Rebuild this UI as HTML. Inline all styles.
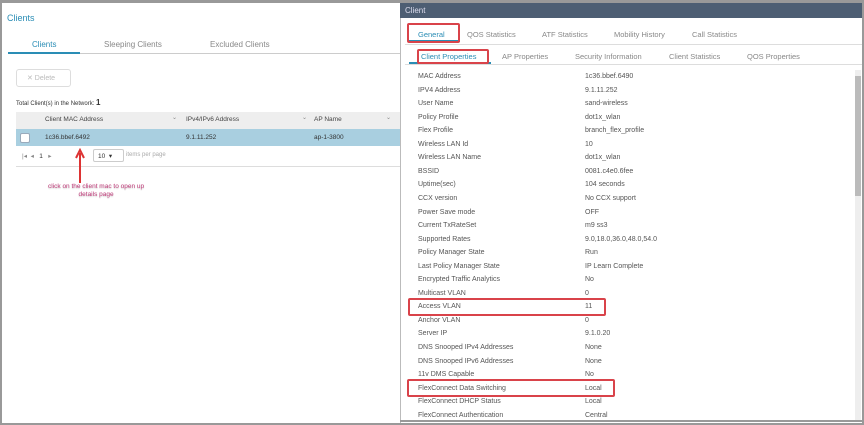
<!DOCTYPE html>
<html><head><style>
*{margin:0;padding:0;box-sizing:border-box}
body{width:864px;height:425px;background:#fff;font-family:"Liberation Sans",sans-serif;position:relative;overflow:hidden;color:#555}
.a{position:absolute;white-space:nowrap}
.rb{position:absolute;border:2px solid #d9434a;border-radius:2px}
.l{font-size:7px;color:#555}
</style></head><body>
<div class="a" style="left:0;top:0;width:864px;height:425px;border:2px solid #999;border-top-width:3px"></div>
<div class="a" style="left:7px;top:13px;font-size:9px;color:#2a8db5">Clients</div>
<div class="a" style="left:32px;top:40px;font-size:8px;color:#2a8db5">Clients</div>
<div class="a" style="left:104px;top:40px;font-size:8px;color:#888">Sleeping Clients</div>
<div class="a" style="left:210px;top:40px;font-size:8px;color:#888">Excluded Clients</div>
<div class="a" style="left:8px;top:53px;width:392px;height:1px;background:#ccc"></div>
<div class="a" style="left:8px;top:52px;width:72px;height:2px;background:#2a8db5"></div>
<div class="a" style="left:16px;top:69px;width:55px;height:18px;border:1px solid #ddd;border-radius:3px;font-size:7px;color:#bbb;padding:4px 0 0 10px">✕ Delete</div>
<div class="a" style="left:16px;top:98px;font-size:6px;color:#333">Total Client(s) in the Network: <b style="font-size:8px">1</b></div>
<div class="a" style="left:16px;top:112px;width:384px;height:17px;background:#eee"></div>
<div class="a" style="left:45px;top:116px;font-size:6.5px;color:#444">Client MAC Address</div>
<div class="a" style="left:172px;top:114px;font-size:6px;color:#888">⌄</div>
<div class="a" style="left:186px;top:116px;font-size:6.5px;color:#444">IPv4/IPv6 Address</div>
<div class="a" style="left:302px;top:114px;font-size:6px;color:#888">⌄</div>
<div class="a" style="left:314px;top:116px;font-size:6.5px;color:#444">AP Name</div>
<div class="a" style="left:386px;top:114px;font-size:6px;color:#888">⌄</div>
<div class="a" style="left:16px;top:129px;width:384px;height:17px;background:#a9cfe0"></div>
<div class="a" style="left:20px;top:133px;width:10px;height:10px;background:#fff;border:1px solid #9ab;border-radius:2px"></div>
<div class="a" style="left:45px;top:134px;font-size:6.5px;color:#333">1c36.bbef.6492</div>
<div class="a" style="left:186px;top:134px;font-size:6.5px;color:#333">9.1.11.252</div>
<div class="a" style="left:314px;top:134px;font-size:6.5px;color:#333">ap-1-3800</div>
<div class="a" style="left:16px;top:146px;width:384px;height:21px;border-bottom:1px solid #ddd"></div>
<div class="a" style="left:22px;top:152px;font-size:6.5px;color:#888">|◂ &nbsp;◂ &nbsp;&nbsp;<span style="color:#333">1</span>&nbsp;&nbsp; ▸</div>
<div class="a" style="left:93px;top:149px;width:31px;height:13px;border:1px solid #ccc;border-radius:2px;font-size:6.5px;color:#333;padding:2px 0 0 4px">10 &nbsp;▾</div>
<div class="a" style="left:126px;top:152px;font-size:6px;color:#aaa">items per page</div>
<svg class="a" style="left:74px;top:148px" width="12" height="36"><path d="M6 35 L6 5 M2 10 L6 2 L10 10" stroke="#d33" stroke-width="2" fill="none"/></svg>
<div class="a" style="left:48px;top:183px;font-size:6.5px;color:#c03c7a;text-align:center;line-height:8px;text-shadow:0 1px 1px #ccc">click on the client mac to open up<br>details page</div>

<div class="a" style="left:400px;top:3px;width:462px;height:420px;background:#fff;border-left:1px solid #bbb"></div>
<div class="a" style="left:400px;top:3px;width:462px;height:15px;background:#4d5e73;color:#dde;font-size:8px;padding:3px 0 0 5px">Client</div>
<div class="a" style="left:418px;top:30px;font-size:7.5px;color:#2a8db5">General</div>
<div class="a" style="left:467px;top:30px;font-size:7.5px;color:#888">QOS Statistics</div>
<div class="a" style="left:542px;top:30px;font-size:7.5px;color:#888">ATF Statistics</div>
<div class="a" style="left:614px;top:30px;font-size:7.5px;color:#888">Mobility History</div>
<div class="a" style="left:692px;top:30px;font-size:7.5px;color:#888">Call Statistics</div>
<div class="a" style="left:405px;top:44px;width:457px;height:1px;background:#ddd"></div>
<div class="a" style="left:408px;top:40px;width:52px;height:2px;background:#2a8db5"></div>
<div class="rb" style="left:407px;top:23px;width:53px;height:20px"></div>
<div class="a" style="left:421px;top:52px;font-size:7.5px;color:#2a8db5">Client Properties</div>
<div class="a" style="left:502px;top:52px;font-size:7.5px;color:#888">AP Properties</div>
<div class="a" style="left:575px;top:52px;font-size:7.5px;color:#888">Security Information</div>
<div class="a" style="left:669px;top:52px;font-size:7.5px;color:#888">Client Statistics</div>
<div class="a" style="left:747px;top:52px;font-size:7.5px;color:#888">QOS Properties</div>
<div class="a" style="left:405px;top:64px;width:457px;height:1px;background:#ddd"></div>
<div class="a" style="left:409px;top:62px;width:82px;height:2px;background:#2a8db5"></div>
<div class="rb" style="left:417px;top:49px;width:72px;height:15px"></div>
<div class="a" style="left:855px;top:70px;width:6px;height:350px;background:#eee"></div>
<div class="a" style="left:855px;top:76px;width:6px;height:120px;background:#bbb"></div>
<div id="rows"></div>
<div class="rb" style="left:408px;top:298px;width:198px;height:18px"></div>
<div class="rb" style="left:407px;top:379px;width:208px;height:18px"></div>
<div class="a" style="left:400px;top:420px;width:462px;height:2px;background:#999"></div>
<script>
var r=[["MAC Address","1c36.bbef.6490"],["IPV4 Address","9.1.11.252"],["User Name","sand-wireless"],["Policy Profile","dot1x_wlan"],["Flex Profile","branch_flex_profile"],["Wireless LAN Id","10"],["Wireless LAN Name","dot1x_wlan"],["BSSID","0081.c4e0.6fee"],["Uptime(sec)","104 seconds"],["CCX version","No CCX support"],["Power Save mode","OFF"],["Current TxRateSet","m9 ss3"],["Supported Rates","9.0,18.0,36.0,48.0,54.0"],["Policy Manager State","Run"],["Last Policy Manager State","IP Learn Complete"],["Encrypted Traffic Analytics","No"],["Multicast VLAN","0"],["Access VLAN","11"],["Anchor VLAN","0"],["Server IP","9.1.0.20"],["DNS Snooped IPv4 Addresses","None"],["DNS Snooped IPv6 Addresses","None"],["11v DMS Capable","No"],["FlexConnect Data Switching","Local"],["FlexConnect DHCP Status","Local"],["FlexConnect Authentication","Central"]];
var h="";r.forEach(function(x,i){var y=73+i*13.55;h+='<div class="a l" style="left:418px;top:'+y+'px">'+x[0]+'</div><div class="a l" style="left:585px;top:'+y+'px">'+x[1]+'</div>';});
document.getElementById("rows").outerHTML=h;
</script>
</body></html>
